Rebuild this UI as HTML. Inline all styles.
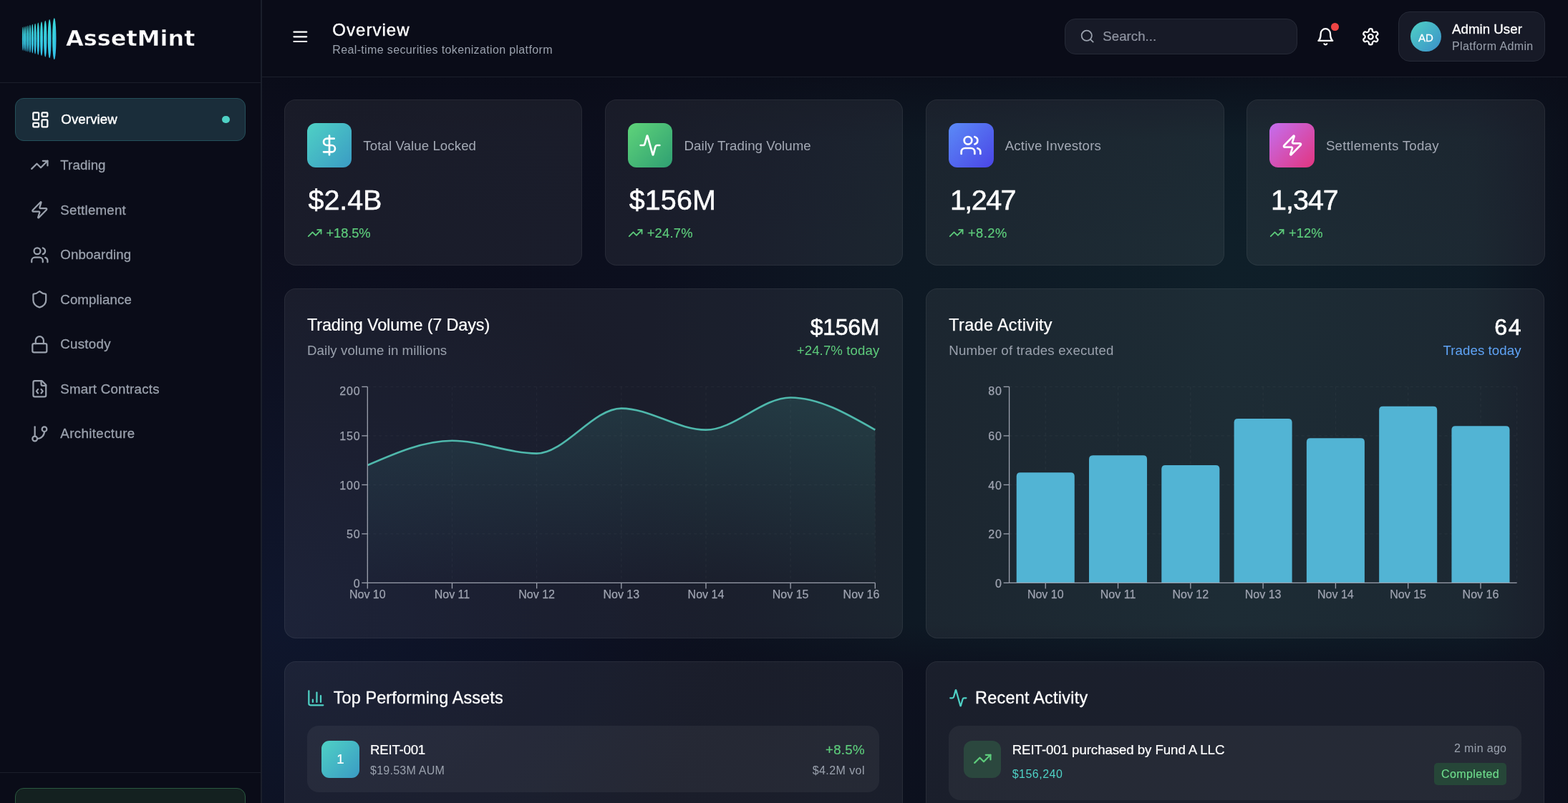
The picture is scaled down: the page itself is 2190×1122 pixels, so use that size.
<!DOCTYPE html>
<html lang="en"><head><meta charset="utf-8"><title>AssetMint – Overview</title><style>
*{margin:0;padding:0}
html,body{width:2190px;height:1122px;overflow:hidden;background:#0a0c18}
body{position:relative;font-family:"Liberation Sans",Arial,sans-serif;-webkit-font-smoothing:antialiased}
#app{position:absolute;left:0;top:0;width:2190px;height:1122px;overflow:hidden;will-change:transform}
.b{position:absolute}
.t{position:absolute;white-space:nowrap}
.ic{position:absolute;overflow:visible}
#mainbg{background:
 linear-gradient(180deg, rgba(10,12,24,0.75) 0px, rgba(10,12,24,0.5) 34px, rgba(10,12,24,0.12) 90px, rgba(10,12,24,0) 240px),
 radial-gradient(ellipse 620px 520px at 20px 760px, rgba(20,36,72,0.36), rgba(20,36,72,0) 100%),
 linear-gradient(0deg, rgba(12,15,29,0.85) 0px, rgba(12,15,29,0.8) 185px, rgba(12,15,29,0) 250px),
 linear-gradient(270deg, rgba(10,12,24,0.75) 0px, rgba(10,12,24,0.55) 30px, rgba(10,12,24,0) 130px),
 linear-gradient(90deg,#0c0e1d 0%,#0c0f1e 30%,#0e1924 50%,#0f1f29 74%,#0e1a25 100%);}
</style></head><body><div id="app">
<div class="b" style="left:0.00px;top:0.00px;width:2190.00px;height:1122.00px;background:#0a0c18;"></div>
<div class="b" id="mainbg" style="left:365px;top:107px;width:1824px;height:1015px;"></div>
<div class="b" style="left:365.00px;top:0.00px;width:1824.00px;height:107.00px;background:#0a0c18;"></div>
<div class="b" style="left:365.00px;top:106.70px;width:1824.00px;height:1.33px;background:#1c202c;"></div>
<div class="b" style="left:0.00px;top:0.00px;width:364.50px;height:1122.00px;background:#0a0c18;"></div>
<div class="b" style="left:364.20px;top:0.00px;width:1.33px;height:1122.00px;background:#1b1f2b;"></div>
<div class="b" style="left:0.00px;top:115.00px;width:364.50px;height:1.33px;background:#1b1f2b;"></div>
<div class="b" style="left:0.00px;top:1078.60px;width:364.50px;height:1.33px;background:#1b1f2b;"></div>
<div class="b" style="left:21.00px;top:1101.00px;width:321.50px;height:40.00px;background:#142120;border:1.33px solid #2a5a40;border-radius:12px;box-sizing:border-box;"></div>
<svg class="ic" style="left:0;top:0" width="120" height="110" viewBox="0 0 120 110"><defs><linearGradient id="lg" x1="0" y1="0" x2="1" y2="1"><stop offset="0" stop-color="#3fe3d3"/><stop offset="1" stop-color="#2fb4ee"/></linearGradient></defs><g fill="url(#lg)"><ellipse cx="31.80" cy="54.2" rx="0.90" ry="16.50"/><ellipse cx="33.93" cy="54.2" rx="0.98" ry="17.11"/><ellipse cx="36.32" cy="54.2" rx="1.08" ry="17.78"/><ellipse cx="38.99" cy="54.2" rx="1.19" ry="18.54"/><ellipse cx="41.98" cy="54.2" rx="1.30" ry="19.39"/><ellipse cx="45.33" cy="54.2" rx="1.44" ry="20.34"/><ellipse cx="49.09" cy="54.2" rx="1.59" ry="21.41"/><ellipse cx="53.29" cy="54.2" rx="1.75" ry="22.61"/><ellipse cx="58.00" cy="54.2" rx="1.94" ry="23.94"/><ellipse cx="63.28" cy="54.2" rx="2.15" ry="25.44"/><ellipse cx="69.18" cy="54.2" rx="2.39" ry="27.12"/><ellipse cx="75.80" cy="54.2" rx="2.65" ry="29.00"/></g></svg>
<div class="t" id="t1" style="top:38.75px;font-size:30.60px;line-height:30.60px;color:#ffffff;font-weight:700;font-family:'DejaVu Sans',sans-serif;left:91.80px;-webkit-text-stroke:0.5px #0a0c18;transform:scaleX(1.045);transform-origin:0 50%;">AssetMint</div>
<div class="b" style="left:21.00px;top:136.80px;width:321.50px;height:60.20px;background:#1a2d3a;border:1.33px solid #24505a;border-radius:12px;box-sizing:border-box;"></div>
<div class="b" style="left:310.20px;top:161.50px;width:10.67px;height:10.67px;background:#4fd1c5;border-radius:50%;"></div>
<svg class="ic" style="left:43.30px;top:153.70px" width="26.67" height="26.67" viewBox="0 0 24 24" fill="none" stroke="#ffffff" stroke-width="2" stroke-linecap="round" stroke-linejoin="round"><rect width="7" height="9" x="3" y="3" rx="1"/><rect width="7" height="5" x="14" y="3" rx="1"/><rect width="7" height="9" x="14" y="12" rx="1"/><rect width="7" height="5" x="3" y="16" rx="1"/></svg>
<div class="t" id="t2" style="top:158.28px;font-size:18.67px;line-height:18.67px;color:#ffffff;-webkit-text-stroke:0.4px #ffffff;letter-spacing:0.107px;left:85.30px;">Overview</div>
<svg class="ic" style="left:42.30px;top:217.40px" width="26.67" height="26.67" viewBox="0 0 24 24" fill="none" stroke="#9aa1ad" stroke-width="2" stroke-linecap="round" stroke-linejoin="round"><polyline points="22 7 13.5 15.5 8.5 10.5 2 17"/><polyline points="16 7 22 7 22 13"/></svg>
<div class="t" id="t3" style="top:221.98px;font-size:18.67px;line-height:18.67px;color:#9aa1ad;-webkit-text-stroke:0.3px #9aa1ad;letter-spacing:0.104px;left:84.30px;">Trading</div>
<svg class="ic" style="left:42.30px;top:280.10px" width="26.67" height="26.67" viewBox="0 0 24 24" fill="none" stroke="#9aa1ad" stroke-width="2" stroke-linecap="round" stroke-linejoin="round"><path d="M4 14a1 1 0 0 1-.78-1.63l9.9-10.2a.5.5 0 0 1 .86.46l-1.92 6.02A1 1 0 0 0 13 10h7a1 1 0 0 1 .78 1.63l-9.9 10.2a.5.5 0 0 1-.86-.46l1.92-6.02A1 1 0 0 0 11 14z"/></svg>
<div class="t" id="t4" style="top:284.68px;font-size:18.67px;line-height:18.67px;color:#9aa1ad;-webkit-text-stroke:0.3px #9aa1ad;letter-spacing:0.257px;left:84.30px;">Settlement</div>
<svg class="ic" style="left:42.30px;top:342.60px" width="26.67" height="26.67" viewBox="0 0 24 24" fill="none" stroke="#9aa1ad" stroke-width="2" stroke-linecap="round" stroke-linejoin="round"><path d="M16 21v-2a4 4 0 0 0-4-4H6a4 4 0 0 0-4 4v2"/><circle cx="9" cy="7" r="4"/><path d="M22 21v-2a4 4 0 0 0-3-3.87"/><path d="M16 3.13a4 4 0 0 1 0 7.75"/></svg>
<div class="t" id="t5" style="top:347.18px;font-size:18.67px;line-height:18.67px;color:#9aa1ad;-webkit-text-stroke:0.3px #9aa1ad;letter-spacing:0.156px;left:84.30px;">Onboarding</div>
<svg class="ic" style="left:42.30px;top:405.20px" width="26.67" height="26.67" viewBox="0 0 24 24" fill="none" stroke="#9aa1ad" stroke-width="2" stroke-linecap="round" stroke-linejoin="round"><path d="M20 13c0 5-3.5 7.5-7.66 8.95a1 1 0 0 1-.67-.01C7.5 20.5 4 18 4 13V6a1 1 0 0 1 1-1c2 0 4.5-1.2 6.24-2.72a1.17 1.17 0 0 1 1.52 0C14.51 3.81 17 5 19 5a1 1 0 0 1 1 1z"/></svg>
<div class="t" id="t6" style="top:409.78px;font-size:18.67px;line-height:18.67px;color:#9aa1ad;-webkit-text-stroke:0.3px #9aa1ad;letter-spacing:0.109px;left:84.30px;">Compliance</div>
<svg class="ic" style="left:42.30px;top:467.90px" width="26.67" height="26.67" viewBox="0 0 24 24" fill="none" stroke="#9aa1ad" stroke-width="2" stroke-linecap="round" stroke-linejoin="round"><rect width="18" height="11" x="3" y="11" rx="2" ry="2"/><path d="M7 11V7a5 5 0 0 1 10 0v4"/></svg>
<div class="t" id="t7" style="top:472.48px;font-size:18.67px;line-height:18.67px;color:#9aa1ad;-webkit-text-stroke:0.3px #9aa1ad;letter-spacing:0.291px;left:84.30px;">Custody</div>
<svg class="ic" style="left:42.30px;top:530.40px" width="26.67" height="26.67" viewBox="0 0 24 24" fill="none" stroke="#9aa1ad" stroke-width="2" stroke-linecap="round" stroke-linejoin="round"><path d="M10 12.5 8 15l2 2.5"/><path d="m14 12.5 2 2.5-2 2.5"/><path d="M14 2v4a2 2 0 0 0 2 2h4"/><path d="M15 2H6a2 2 0 0 0-2 2v16a2 2 0 0 0 2 2h12a2 2 0 0 0 2-2V7z"/></svg>
<div class="t" id="t8" style="top:534.98px;font-size:18.67px;line-height:18.67px;color:#9aa1ad;-webkit-text-stroke:0.3px #9aa1ad;letter-spacing:0.244px;left:84.30px;">Smart Contracts</div>
<svg class="ic" style="left:42.30px;top:592.90px" width="26.67" height="26.67" viewBox="0 0 24 24" fill="none" stroke="#9aa1ad" stroke-width="2" stroke-linecap="round" stroke-linejoin="round"><line x1="6" x2="6" y1="3" y2="15"/><circle cx="18" cy="6" r="3"/><circle cx="6" cy="18" r="3"/><path d="M18 9a9 9 0 0 1-9 9"/></svg>
<div class="t" id="t9" style="top:597.48px;font-size:18.67px;line-height:18.67px;color:#9aa1ad;-webkit-text-stroke:0.3px #9aa1ad;letter-spacing:0.396px;left:84.30px;">Architecture</div>
<svg class="ic" style="left:406.30px;top:37.50px" width="26.67" height="26.67" viewBox="0 0 24 24" fill="none" stroke="#ffffff" stroke-width="2" stroke-linecap="round" stroke-linejoin="round"><line x1="4" x2="20" y1="12" y2="12"/><line x1="4" x2="20" y1="6" y2="6"/><line x1="4" x2="20" y1="18" y2="18"/></svg>
<div class="t" id="t10" style="top:29.88px;font-size:24.00px;line-height:24.00px;color:#ffffff;-webkit-text-stroke:0.35px #ffffff;letter-spacing:1.024px;left:464.30px;">Overview</div>
<div class="t" id="t11" style="top:62.48px;font-size:16.00px;line-height:16.00px;color:#9aa1ad;letter-spacing:0.357px;left:464.30px;">Real-time securities tokenization platform</div>
<div class="b" style="left:1486.70px;top:26.00px;width:325.60px;height:50.00px;background:#171a27;border:1.33px solid #262a37;border-radius:15px;box-sizing:border-box;"></div>
<svg class="ic" style="left:1508.30px;top:40.20px" width="21.33" height="21.33" viewBox="0 0 24 24" fill="none" stroke="#9aa1ad" stroke-width="2" stroke-linecap="round" stroke-linejoin="round"><circle cx="11" cy="11" r="8"/><path d="m21 21-4.3-4.3"/></svg>
<div class="t" id="t12" style="top:42.18px;font-size:18.67px;line-height:18.67px;color:#8f94a1;-webkit-text-stroke:0.2px #8f94a1;letter-spacing:0.029px;left:1540.30px;">Search...</div>
<svg class="ic" style="left:1837.80px;top:37.50px" width="26.67" height="26.67" viewBox="0 0 24 24" fill="none" stroke="#ffffff" stroke-width="2" stroke-linecap="round" stroke-linejoin="round"><path d="M6 8a6 6 0 0 1 12 0c0 7 3 9 3 9H3s3-2 3-9"/><path d="M10.3 21a1.94 1.94 0 0 0 3.4 0"/></svg>
<div class="b" style="left:1859.00px;top:32.30px;width:10.67px;height:10.67px;background:#ee4444;border-radius:50%;"></div>
<svg class="ic" style="left:1900.50px;top:37.50px" width="26.67" height="26.67" viewBox="0 0 24 24" fill="none" stroke="#ffffff" stroke-width="2" stroke-linecap="round" stroke-linejoin="round"><path d="M12.22 2h-.44a2 2 0 0 0-2 2v.18a2 2 0 0 1-1 1.73l-.43.25a2 2 0 0 1-2 0l-.15-.08a2 2 0 0 0-2.73.73l-.22.38a2 2 0 0 0 .73 2.73l.15.1a2 2 0 0 1 1 1.72v.51a2 2 0 0 1-1 1.74l-.15.09a2 2 0 0 0-.73 2.73l.22.38a2 2 0 0 0 2.73.73l.15-.08a2 2 0 0 1 2 0l.43.25a2 2 0 0 1 1 1.73V20a2 2 0 0 0 2 2h.44a2 2 0 0 0 2-2v-.18a2 2 0 0 1 1-1.73l.43-.25a2 2 0 0 1 2 0l.15.08a2 2 0 0 0 2.73-.73l.22-.39a2 2 0 0 0-.73-2.73l-.15-.08a2 2 0 0 1-1-1.74v-.5a2 2 0 0 1 1-1.74l.15-.09a2 2 0 0 0 .73-2.73l-.22-.38a2 2 0 0 0-2.73-.73l-.15.08a2 2 0 0 1-2 0l-.43-.25a2 2 0 0 1-1-1.73V4a2 2 0 0 0-2-2z"/><circle cx="12" cy="12" r="3"/></svg>
<div class="b" style="left:1953.30px;top:15.70px;width:204.30px;height:70.20px;background:#171a27;border:1.33px solid #262a37;border-radius:16px;box-sizing:border-box;"></div>
<div class="b" style="left:1970.00px;top:29.70px;width:42.67px;height:42.67px;background:linear-gradient(135deg,#4fd1c5,#3b8fc9);border-radius:50%;"></div>
<div class="t" id="t13" style="top:44.87px;font-size:15.00px;line-height:15.00px;color:#ffffff;-webkit-text-stroke:0.3px #ffffff;left:1991.30px;transform:translateX(-50%);">AD</div>
<div class="t" id="t14" style="top:32.48px;font-size:18.67px;line-height:18.67px;color:#ffffff;-webkit-text-stroke:0.3px #ffffff;letter-spacing:0.048px;left:2028.00px;">Admin User</div>
<div class="t" id="t15" style="top:57.38px;font-size:16.00px;line-height:16.00px;color:#9aa1ad;letter-spacing:0.363px;left:2028.00px;">Platform Admin</div>
<div class="b" style="left:396.70px;top:139.30px;width:416.60px;height:231.40px;background:rgba(255,255,255,0.06);border:1.33px solid rgba(255,255,255,0.06);border-radius:16px;box-sizing:border-box;"></div>
<div class="b" style="left:428.80px;top:172.00px;width:62.40px;height:62.40px;background:linear-gradient(135deg,#4fd1c5,#3a9bc4);border-radius:12px;"></div>
<svg class="ic" style="left:444.00px;top:187.20px" width="32.00" height="32.00" viewBox="0 0 24 24" fill="none" stroke="#ffffff" stroke-width="2" stroke-linecap="round" stroke-linejoin="round"><line x1="12" x2="12" y1="2" y2="22"/><path d="M17 5H9.5a3.5 3.5 0 0 0 0 7h5a3.5 3.5 0 0 1 0 7H6"/></svg>
<div class="t" id="t16" style="top:195.38px;font-size:18.67px;line-height:18.67px;color:#a3a9b5;letter-spacing:0.084px;left:507.30px;">Total Value Locked</div>
<div class="t" id="t17" style="top:260.30px;font-size:39.50px;line-height:39.50px;color:#ffffff;-webkit-text-stroke:0.5px #ffffff;letter-spacing:-0.084px;left:430.50px;">$2.4B</div>
<svg class="ic" style="left:428.70px;top:315.30px" width="21.33" height="21.33" viewBox="0 0 24 24" fill="none" stroke="#5dcb7b" stroke-width="2" stroke-linecap="round" stroke-linejoin="round"><polyline points="22 7 13.5 15.5 8.5 10.5 2 17"/><polyline points="16 7 22 7 22 13"/></svg>
<div class="t" id="t18" style="top:317.26px;font-size:18.30px;line-height:18.30px;color:#5dcb7b;-webkit-text-stroke:0.2px #5dcb7b;letter-spacing:-0.083px;left:455.50px;">+18.5%</div>
<div class="b" style="left:844.90px;top:139.30px;width:416.60px;height:231.40px;background:rgba(255,255,255,0.06);border:1.33px solid rgba(255,255,255,0.06);border-radius:16px;box-sizing:border-box;"></div>
<div class="b" style="left:877.00px;top:172.00px;width:62.40px;height:62.40px;background:linear-gradient(135deg,#5fd47a,#2f9f72);border-radius:12px;"></div>
<svg class="ic" style="left:892.20px;top:187.20px" width="32.00" height="32.00" viewBox="0 0 24 24" fill="none" stroke="#ffffff" stroke-width="2" stroke-linecap="round" stroke-linejoin="round"><path d="M22 12h-2.48a2 2 0 0 0-1.93 1.46l-2.35 8.36a.25.25 0 0 1-.48 0L9.24 2.18a.25.25 0 0 0-.48 0l-2.35 8.36A2 2 0 0 1 4.49 12H2"/></svg>
<div class="t" id="t19" style="top:195.38px;font-size:18.67px;line-height:18.67px;color:#a3a9b5;letter-spacing:0.048px;left:955.50px;">Daily Trading Volume</div>
<div class="t" id="t20" style="top:260.30px;font-size:39.50px;line-height:39.50px;color:#ffffff;-webkit-text-stroke:0.5px #ffffff;letter-spacing:0.105px;left:878.70px;">$156M</div>
<svg class="ic" style="left:876.90px;top:315.30px" width="21.33" height="21.33" viewBox="0 0 24 24" fill="none" stroke="#5dcb7b" stroke-width="2" stroke-linecap="round" stroke-linejoin="round"><polyline points="22 7 13.5 15.5 8.5 10.5 2 17"/><polyline points="16 7 22 7 22 13"/></svg>
<div class="t" id="t21" style="top:317.26px;font-size:18.30px;line-height:18.30px;color:#5dcb7b;-webkit-text-stroke:0.2px #5dcb7b;letter-spacing:0.237px;left:903.70px;">+24.7%</div>
<div class="b" style="left:1293.10px;top:139.30px;width:416.60px;height:231.40px;background:rgba(255,255,255,0.06);border:1.33px solid rgba(255,255,255,0.06);border-radius:16px;box-sizing:border-box;"></div>
<div class="b" style="left:1325.20px;top:172.00px;width:62.40px;height:62.40px;background:linear-gradient(135deg,#5b8bf7,#4a45e6);border-radius:12px;"></div>
<svg class="ic" style="left:1340.40px;top:187.20px" width="32.00" height="32.00" viewBox="0 0 24 24" fill="none" stroke="#ffffff" stroke-width="2" stroke-linecap="round" stroke-linejoin="round"><path d="M16 21v-2a4 4 0 0 0-4-4H6a4 4 0 0 0-4 4v2"/><circle cx="9" cy="7" r="4"/><path d="M22 21v-2a4 4 0 0 0-3-3.87"/><path d="M16 3.13a4 4 0 0 1 0 7.75"/></svg>
<div class="t" id="t22" style="top:195.38px;font-size:18.67px;line-height:18.67px;color:#a3a9b5;letter-spacing:0.167px;left:1403.70px;">Active Investors</div>
<div class="t" id="t23" style="top:260.30px;font-size:39.50px;line-height:39.50px;color:#ffffff;-webkit-text-stroke:0.5px #ffffff;letter-spacing:-1.540px;left:1326.90px;">1,247</div>
<svg class="ic" style="left:1325.10px;top:315.30px" width="21.33" height="21.33" viewBox="0 0 24 24" fill="none" stroke="#5dcb7b" stroke-width="2" stroke-linecap="round" stroke-linejoin="round"><polyline points="22 7 13.5 15.5 8.5 10.5 2 17"/><polyline points="16 7 22 7 22 13"/></svg>
<div class="t" id="t24" style="top:317.26px;font-size:18.30px;line-height:18.30px;color:#5dcb7b;-webkit-text-stroke:0.2px #5dcb7b;letter-spacing:0.510px;left:1351.90px;">+8.2%</div>
<div class="b" style="left:1741.30px;top:139.30px;width:416.60px;height:231.40px;background:rgba(255,255,255,0.06);border:1.33px solid rgba(255,255,255,0.06);border-radius:16px;box-sizing:border-box;"></div>
<div class="b" style="left:1773.40px;top:172.00px;width:62.40px;height:62.40px;background:linear-gradient(135deg,#c46ff0,#e2357f);border-radius:12px;"></div>
<svg class="ic" style="left:1788.60px;top:187.20px" width="32.00" height="32.00" viewBox="0 0 24 24" fill="none" stroke="#ffffff" stroke-width="2" stroke-linecap="round" stroke-linejoin="round"><path d="M4 14a1 1 0 0 1-.78-1.63l9.9-10.2a.5.5 0 0 1 .86.46l-1.92 6.02A1 1 0 0 0 13 10h7a1 1 0 0 1 .78 1.63l-9.9 10.2a.5.5 0 0 1-.86-.46l1.92-6.02A1 1 0 0 0 11 14z"/></svg>
<div class="t" id="t25" style="top:195.38px;font-size:18.67px;line-height:18.67px;color:#a3a9b5;letter-spacing:0.285px;left:1851.90px;">Settlements Today</div>
<div class="t" id="t26" style="top:260.30px;font-size:39.50px;line-height:39.50px;color:#ffffff;-webkit-text-stroke:0.5px #ffffff;letter-spacing:-1.040px;left:1775.10px;">1,347</div>
<svg class="ic" style="left:1773.30px;top:315.30px" width="21.33" height="21.33" viewBox="0 0 24 24" fill="none" stroke="#5dcb7b" stroke-width="2" stroke-linecap="round" stroke-linejoin="round"><polyline points="22 7 13.5 15.5 8.5 10.5 2 17"/><polyline points="16 7 22 7 22 13"/></svg>
<div class="t" id="t27" style="top:317.26px;font-size:18.30px;line-height:18.30px;color:#5dcb7b;-webkit-text-stroke:0.2px #5dcb7b;letter-spacing:0.045px;left:1800.10px;">+12%</div>
<div class="b" style="left:396.70px;top:403.30px;width:864.30px;height:488.70px;background:rgba(255,255,255,0.06);border:1.33px solid rgba(255,255,255,0.06);border-radius:16px;box-sizing:border-box;"></div>
<div class="b" style="left:1292.70px;top:403.30px;width:864.60px;height:488.70px;background:rgba(255,255,255,0.06);border:1.33px solid rgba(255,255,255,0.06);border-radius:16px;box-sizing:border-box;"></div>
<div class="t" id="t28" style="top:442.87px;font-size:23.40px;line-height:23.40px;color:#ffffff;-webkit-text-stroke:0.2px #ffffff;letter-spacing:-0.120px;left:429.00px;">Trading Volume (7 Days)</div>
<div class="t" id="t29" style="top:481.48px;font-size:18.67px;line-height:18.67px;color:#9aa1ad;letter-spacing:0.057px;left:429.00px;">Daily volume in millions</div>
<div class="t" id="t30" style="top:441.27px;font-size:32.00px;line-height:32.00px;color:#ffffff;-webkit-text-stroke:0.6px #ffffff;letter-spacing:-0.311px;right:962.01px;">$156M</div>
<div class="t" id="t31" style="top:481.48px;font-size:18.67px;line-height:18.67px;color:#5dcb7b;letter-spacing:0.089px;right:961.61px;">+24.7% today</div>
<div class="t" id="t32" style="top:442.87px;font-size:23.40px;line-height:23.40px;color:#ffffff;-webkit-text-stroke:0.25px #ffffff;letter-spacing:0.359px;left:1325.30px;">Trade Activity</div>
<div class="t" id="t33" style="top:481.48px;font-size:18.67px;line-height:18.67px;color:#9aa1ad;letter-spacing:0.215px;left:1325.30px;">Number of trades executed</div>
<div class="t" id="t34" style="top:441.27px;font-size:32.00px;line-height:32.00px;color:#ffffff;-webkit-text-stroke:0.6px #ffffff;letter-spacing:1.806px;right:63.59px;">64</div>
<div class="t" id="t35" style="top:481.48px;font-size:18.67px;line-height:18.67px;color:#5fa3f5;letter-spacing:0.091px;right:65.31px;">Trades today</div>
<svg class="ic" style="left:0;top:0" width="2190" height="1122" viewBox="0 0 2190 1122" font-family="'Liberation Sans',Arial,sans-serif" font-size="16" stroke-width="0.25"><defs><linearGradient id="ag" x1="0" y1="0" x2="0" y2="1"><stop offset="0" stop-color="#4db6ac" stop-opacity="0.17"/><stop offset="1" stop-color="#4db6ac" stop-opacity="0.0"/></linearGradient></defs><line x1="513.3" x2="1222.3" y1="814.40" y2="814.40" stroke="#ffffff" stroke-opacity="0.038" stroke-width="1.33" stroke-dasharray="4 4"/><line x1="513.3" x2="1222.3" y1="745.90" y2="745.90" stroke="#ffffff" stroke-opacity="0.038" stroke-width="1.33" stroke-dasharray="4 4"/><line x1="513.3" x2="1222.3" y1="677.40" y2="677.40" stroke="#ffffff" stroke-opacity="0.038" stroke-width="1.33" stroke-dasharray="4 4"/><line x1="513.3" x2="1222.3" y1="608.90" y2="608.90" stroke="#ffffff" stroke-opacity="0.038" stroke-width="1.33" stroke-dasharray="4 4"/><line x1="513.3" x2="1222.3" y1="540.40" y2="540.40" stroke="#ffffff" stroke-opacity="0.038" stroke-width="1.33" stroke-dasharray="4 4"/><line x1="513.30" x2="513.30" y1="540.4" y2="814.4" stroke="#ffffff" stroke-opacity="0.038" stroke-width="1.33" stroke-dasharray="4 4"/><line x1="631.47" x2="631.47" y1="540.4" y2="814.4" stroke="#ffffff" stroke-opacity="0.038" stroke-width="1.33" stroke-dasharray="4 4"/><line x1="749.63" x2="749.63" y1="540.4" y2="814.4" stroke="#ffffff" stroke-opacity="0.038" stroke-width="1.33" stroke-dasharray="4 4"/><line x1="867.80" x2="867.80" y1="540.4" y2="814.4" stroke="#ffffff" stroke-opacity="0.038" stroke-width="1.33" stroke-dasharray="4 4"/><line x1="985.97" x2="985.97" y1="540.4" y2="814.4" stroke="#ffffff" stroke-opacity="0.038" stroke-width="1.33" stroke-dasharray="4 4"/><line x1="1104.13" x2="1104.13" y1="540.4" y2="814.4" stroke="#ffffff" stroke-opacity="0.038" stroke-width="1.33" stroke-dasharray="4 4"/><line x1="1222.30" x2="1222.30" y1="540.4" y2="814.4" stroke="#ffffff" stroke-opacity="0.038" stroke-width="1.33" stroke-dasharray="4 4"/><path d="M513.30,650.00C552.69,632.88,592.08,615.75,631.47,615.75C670.86,615.75,710.24,633.56,749.63,633.56C789.02,633.56,828.41,570.54,867.80,570.54C907.19,570.54,946.58,600.68,985.97,600.68C1025.36,600.68,1064.74,555.47,1104.13,555.47C1143.52,555.47,1182.91,578.08,1222.30,600.68L1222.3,814.4L513.3,814.4Z" fill="url(#ag)"/><path d="M513.30,650.00C552.69,632.88,592.08,615.75,631.47,615.75C670.86,615.75,710.24,633.56,749.63,633.56C789.02,633.56,828.41,570.54,867.80,570.54C907.19,570.54,946.58,600.68,985.97,600.68C1025.36,600.68,1064.74,555.47,1104.13,555.47C1143.52,555.47,1182.91,578.08,1222.30,600.68" fill="none" stroke="#4fb8ac" stroke-width="2.67"/><line x1="513.3" x2="513.3" y1="540.4" y2="814.4" stroke="#9a9fac" stroke-width="1.33"/><line x1="513.3" x2="1222.3" y1="814.4" y2="814.4" stroke="#9a9fac" stroke-width="1.33"/><line x1="505.29999999999995" x2="513.3" y1="814.40" y2="814.40" stroke="#9a9fac" stroke-width="1.33"/><text x="503.40" y="820.90" text-anchor="end" letter-spacing="0.8" fill="#9ea3b0" stroke="#9ea3b0">0</text><line x1="505.29999999999995" x2="513.3" y1="745.90" y2="745.90" stroke="#9a9fac" stroke-width="1.33"/><text x="503.40" y="752.40" text-anchor="end" letter-spacing="0.8" fill="#9ea3b0" stroke="#9ea3b0">50</text><line x1="505.29999999999995" x2="513.3" y1="677.40" y2="677.40" stroke="#9a9fac" stroke-width="1.33"/><text x="503.40" y="683.90" text-anchor="end" letter-spacing="0.8" fill="#9ea3b0" stroke="#9ea3b0">100</text><line x1="505.29999999999995" x2="513.3" y1="608.90" y2="608.90" stroke="#9a9fac" stroke-width="1.33"/><text x="503.40" y="615.40" text-anchor="end" letter-spacing="0.8" fill="#9ea3b0" stroke="#9ea3b0">150</text><line x1="505.29999999999995" x2="513.3" y1="540.40" y2="540.40" stroke="#9a9fac" stroke-width="1.33"/><text x="503.40" y="552.30" text-anchor="end" letter-spacing="0.8" fill="#9ea3b0" stroke="#9ea3b0">200</text><line x1="513.30" x2="513.30" y1="814.4" y2="822.4" stroke="#9a9fac" stroke-width="1.33"/><text x="513.30" y="836.1" text-anchor="middle" fill="#9ea3b0" stroke="#9ea3b0">Nov 10</text><line x1="631.47" x2="631.47" y1="814.4" y2="822.4" stroke="#9a9fac" stroke-width="1.33"/><text x="631.47" y="836.1" text-anchor="middle" fill="#9ea3b0" stroke="#9ea3b0">Nov 11</text><line x1="749.63" x2="749.63" y1="814.4" y2="822.4" stroke="#9a9fac" stroke-width="1.33"/><text x="749.63" y="836.1" text-anchor="middle" fill="#9ea3b0" stroke="#9ea3b0">Nov 12</text><line x1="867.80" x2="867.80" y1="814.4" y2="822.4" stroke="#9a9fac" stroke-width="1.33"/><text x="867.80" y="836.1" text-anchor="middle" fill="#9ea3b0" stroke="#9ea3b0">Nov 13</text><line x1="985.97" x2="985.97" y1="814.4" y2="822.4" stroke="#9a9fac" stroke-width="1.33"/><text x="985.97" y="836.1" text-anchor="middle" fill="#9ea3b0" stroke="#9ea3b0">Nov 14</text><line x1="1104.13" x2="1104.13" y1="814.4" y2="822.4" stroke="#9a9fac" stroke-width="1.33"/><text x="1104.13" y="836.1" text-anchor="middle" fill="#9ea3b0" stroke="#9ea3b0">Nov 15</text><line x1="1222.30" x2="1222.30" y1="814.4" y2="822.4" stroke="#9a9fac" stroke-width="1.33"/><text x="1228.3" y="836.1" text-anchor="end" fill="#9ea3b0" stroke="#9ea3b0">Nov 16</text><line x1="1409.6" x2="2118.6" y1="814.40" y2="814.40" stroke="#ffffff" stroke-opacity="0.038" stroke-width="1.33" stroke-dasharray="4 4"/><line x1="1409.6" x2="2118.6" y1="745.90" y2="745.90" stroke="#ffffff" stroke-opacity="0.038" stroke-width="1.33" stroke-dasharray="4 4"/><line x1="1409.6" x2="2118.6" y1="677.40" y2="677.40" stroke="#ffffff" stroke-opacity="0.038" stroke-width="1.33" stroke-dasharray="4 4"/><line x1="1409.6" x2="2118.6" y1="608.90" y2="608.90" stroke="#ffffff" stroke-opacity="0.038" stroke-width="1.33" stroke-dasharray="4 4"/><line x1="1409.6" x2="2118.6" y1="540.40" y2="540.40" stroke="#ffffff" stroke-opacity="0.038" stroke-width="1.33" stroke-dasharray="4 4"/><line x1="1460.24" x2="1460.24" y1="540.4" y2="814.4" stroke="#ffffff" stroke-opacity="0.038" stroke-width="1.33" stroke-dasharray="4 4"/><line x1="1561.53" x2="1561.53" y1="540.4" y2="814.4" stroke="#ffffff" stroke-opacity="0.038" stroke-width="1.33" stroke-dasharray="4 4"/><line x1="1662.81" x2="1662.81" y1="540.4" y2="814.4" stroke="#ffffff" stroke-opacity="0.038" stroke-width="1.33" stroke-dasharray="4 4"/><line x1="1764.10" x2="1764.10" y1="540.4" y2="814.4" stroke="#ffffff" stroke-opacity="0.038" stroke-width="1.33" stroke-dasharray="4 4"/><line x1="1865.39" x2="1865.39" y1="540.4" y2="814.4" stroke="#ffffff" stroke-opacity="0.038" stroke-width="1.33" stroke-dasharray="4 4"/><line x1="1966.67" x2="1966.67" y1="540.4" y2="814.4" stroke="#ffffff" stroke-opacity="0.038" stroke-width="1.33" stroke-dasharray="4 4"/><line x1="2067.96" x2="2067.96" y1="540.4" y2="814.4" stroke="#ffffff" stroke-opacity="0.038" stroke-width="1.33" stroke-dasharray="4 4"/><line x1="1409.6" x2="1409.6" y1="540.4" y2="814.4" stroke="#ffffff" stroke-opacity="0.038" stroke-width="1.33" stroke-dasharray="4 4"/><line x1="2118.6" x2="2118.6" y1="540.4" y2="814.4" stroke="#ffffff" stroke-opacity="0.038" stroke-width="1.33" stroke-dasharray="4 4"/><path d="M1419.73,814.4V665.61Q1419.73,660.27,1425.06,660.27H1495.43Q1500.76,660.27,1500.76,665.61V814.4Z" fill="#52b4d4"/><path d="M1521.01,814.4V641.63Q1521.01,636.30,1526.34,636.30H1596.71Q1602.04,636.30,1602.04,641.63V814.4Z" fill="#52b4d4"/><path d="M1622.30,814.4V655.33Q1622.30,650.00,1627.63,650.00H1698.00Q1703.33,650.00,1703.33,655.33V814.4Z" fill="#52b4d4"/><path d="M1723.59,814.4V590.25Q1723.59,584.92,1728.92,584.92H1799.28Q1804.61,584.92,1804.61,590.25V814.4Z" fill="#52b4d4"/><path d="M1824.87,814.4V617.66Q1824.87,612.33,1830.20,612.33H1900.57Q1905.90,612.33,1905.90,617.66V814.4Z" fill="#52b4d4"/><path d="M1926.16,814.4V573.13Q1926.16,567.80,1931.49,567.80H2001.86Q2007.19,567.80,2007.19,573.13V814.4Z" fill="#52b4d4"/><path d="M2027.44,814.4V600.53Q2027.44,595.20,2032.77,595.20H2103.14Q2108.47,595.20,2108.47,600.53V814.4Z" fill="#52b4d4"/><line x1="1409.6" x2="1409.6" y1="540.4" y2="814.4" stroke="#9a9fac" stroke-width="1.33"/><line x1="1409.6" x2="2118.6" y1="814.4" y2="814.4" stroke="#9a9fac" stroke-width="1.33"/><line x1="1401.6" x2="1409.6" y1="814.40" y2="814.40" stroke="#9a9fac" stroke-width="1.33"/><text x="1399.70" y="820.90" text-anchor="end" letter-spacing="0.8" fill="#9ea3b0" stroke="#9ea3b0">0</text><line x1="1401.6" x2="1409.6" y1="745.90" y2="745.90" stroke="#9a9fac" stroke-width="1.33"/><text x="1399.70" y="752.40" text-anchor="end" letter-spacing="0.8" fill="#9ea3b0" stroke="#9ea3b0">20</text><line x1="1401.6" x2="1409.6" y1="677.40" y2="677.40" stroke="#9a9fac" stroke-width="1.33"/><text x="1399.70" y="683.90" text-anchor="end" letter-spacing="0.8" fill="#9ea3b0" stroke="#9ea3b0">40</text><line x1="1401.6" x2="1409.6" y1="608.90" y2="608.90" stroke="#9a9fac" stroke-width="1.33"/><text x="1399.70" y="615.40" text-anchor="end" letter-spacing="0.8" fill="#9ea3b0" stroke="#9ea3b0">60</text><line x1="1401.6" x2="1409.6" y1="540.40" y2="540.40" stroke="#9a9fac" stroke-width="1.33"/><text x="1399.70" y="552.30" text-anchor="end" letter-spacing="0.8" fill="#9ea3b0" stroke="#9ea3b0">80</text><line x1="1460.24" x2="1460.24" y1="814.4" y2="822.4" stroke="#9a9fac" stroke-width="1.33"/><text x="1460.24" y="836.1" text-anchor="middle" fill="#9ea3b0" stroke="#9ea3b0">Nov 10</text><line x1="1561.53" x2="1561.53" y1="814.4" y2="822.4" stroke="#9a9fac" stroke-width="1.33"/><text x="1561.53" y="836.1" text-anchor="middle" fill="#9ea3b0" stroke="#9ea3b0">Nov 11</text><line x1="1662.81" x2="1662.81" y1="814.4" y2="822.4" stroke="#9a9fac" stroke-width="1.33"/><text x="1662.81" y="836.1" text-anchor="middle" fill="#9ea3b0" stroke="#9ea3b0">Nov 12</text><line x1="1764.10" x2="1764.10" y1="814.4" y2="822.4" stroke="#9a9fac" stroke-width="1.33"/><text x="1764.10" y="836.1" text-anchor="middle" fill="#9ea3b0" stroke="#9ea3b0">Nov 13</text><line x1="1865.39" x2="1865.39" y1="814.4" y2="822.4" stroke="#9a9fac" stroke-width="1.33"/><text x="1865.39" y="836.1" text-anchor="middle" fill="#9ea3b0" stroke="#9ea3b0">Nov 14</text><line x1="1966.67" x2="1966.67" y1="814.4" y2="822.4" stroke="#9a9fac" stroke-width="1.33"/><text x="1966.67" y="836.1" text-anchor="middle" fill="#9ea3b0" stroke="#9ea3b0">Nov 15</text><line x1="2067.96" x2="2067.96" y1="814.4" y2="822.4" stroke="#9a9fac" stroke-width="1.33"/><text x="2067.96" y="836.1" text-anchor="middle" fill="#9ea3b0" stroke="#9ea3b0">Nov 16</text></svg>
<div class="b" style="left:396.70px;top:924.00px;width:864.30px;height:260.00px;background:rgba(255,255,255,0.06);border:1.33px solid rgba(255,255,255,0.06);border-radius:16px;box-sizing:border-box;"></div>
<div class="b" style="left:1292.70px;top:924.00px;width:864.60px;height:260.00px;background:rgba(255,255,255,0.06);border:1.33px solid rgba(255,255,255,0.06);border-radius:16px;box-sizing:border-box;"></div>
<svg class="ic" style="left:428.00px;top:961.50px" width="26.67" height="26.67" viewBox="0 0 24 24" fill="none" stroke="#4fd1c5" stroke-width="2" stroke-linecap="round" stroke-linejoin="round"><path d="M3 3v16a2 2 0 0 0 2 2h16"/><path d="M18 17V9"/><path d="M13 17V5"/><path d="M8 17v-3"/></svg>
<div class="t" id="t36" style="top:963.87px;font-size:23.40px;line-height:23.40px;color:#ffffff;-webkit-text-stroke:0.3px #ffffff;letter-spacing:0.144px;left:465.70px;">Top Performing Assets</div>
<svg class="ic" style="left:1324.50px;top:961.50px" width="26.67" height="26.67" viewBox="0 0 24 24" fill="none" stroke="#4fd1c5" stroke-width="2" stroke-linecap="round" stroke-linejoin="round"><path d="M22 12h-2.48a2 2 0 0 0-1.93 1.46l-2.35 8.36a.25.25 0 0 1-.48 0L9.24 2.18a.25.25 0 0 0-.48 0l-2.35 8.36A2 2 0 0 1 4.49 12H2"/></svg>
<div class="t" id="t37" style="top:963.87px;font-size:23.40px;line-height:23.40px;color:#ffffff;-webkit-text-stroke:0.3px #ffffff;letter-spacing:0.271px;left:1362.00px;">Recent Activity</div>
<div class="b" style="left:429.00px;top:1013.70px;width:799.30px;height:93.60px;background:rgba(255,255,255,0.05);border-radius:16px;"></div>
<div class="b" style="left:1325.00px;top:1013.70px;width:800.00px;height:104.00px;background:rgba(255,255,255,0.05);border-radius:16px;"></div>
<div class="b" style="left:449.30px;top:1034.50px;width:52.30px;height:52.30px;background:linear-gradient(135deg,#4fd1c5,#3a9bc4);border-radius:11px;"></div>
<div class="t" id="t38" style="top:1051.68px;font-size:18.67px;line-height:18.67px;color:#ffffff;-webkit-text-stroke:0.2px #ffffff;left:475.50px;transform:translateX(-50%);">1</div>
<div class="t" id="t39" style="top:1038.68px;font-size:18.67px;line-height:18.67px;color:#ffffff;-webkit-text-stroke:0.2px #ffffff;letter-spacing:-0.230px;left:517.00px;">REIT-001</div>
<div class="t" id="t40" style="top:1068.98px;font-size:16.00px;line-height:16.00px;color:#9aa1ad;letter-spacing:0.251px;left:517.00px;">$19.53M AUM</div>
<div class="t" id="t41" style="top:1038.68px;font-size:18.67px;line-height:18.67px;color:#5dcb7b;-webkit-text-stroke:0.2px #5dcb7b;letter-spacing:0.270px;right:982.23px;">+8.5%</div>
<div class="t" id="t42" style="top:1068.98px;font-size:16.00px;line-height:16.00px;color:#9aa1ad;letter-spacing:0.428px;right:982.07px;">$4.2M vol</div>
<div class="b" style="left:1346.00px;top:1034.50px;width:52.30px;height:52.30px;background:#2b473e;border-radius:12px;"></div>
<svg class="ic" style="left:1358.80px;top:1047.30px" width="26.67" height="26.67" viewBox="0 0 24 24" fill="none" stroke="#5dcb7b" stroke-width="2" stroke-linecap="round" stroke-linejoin="round"><polyline points="22 7 13.5 15.5 8.5 10.5 2 17"/><polyline points="16 7 22 7 22 13"/></svg>
<div class="t" id="t43" style="top:1038.88px;font-size:18.67px;line-height:18.67px;color:#ffffff;-webkit-text-stroke:0.2px #ffffff;letter-spacing:-0.064px;left:1413.70px;">REIT-001 purchased by Fund A LLC</div>
<div class="t" id="t44" style="top:1073.88px;font-size:16.00px;line-height:16.00px;color:#4fd1c5;letter-spacing:0.495px;left:1413.70px;">$156,240</div>
<div class="t" id="t45" style="top:1037.98px;font-size:16.00px;line-height:16.00px;color:#9aa1ad;letter-spacing:0.329px;right:85.67px;">2 min ago</div>
<div class="b" style="left:2002.70px;top:1066.30px;width:101.30px;height:30.70px;background:#264638;border-radius:5px;"></div>
<div class="t" id="t46" style="top:1074.08px;font-size:16.00px;line-height:16.00px;color:#6edc8c;-webkit-text-stroke:0.15px #6edc8c;letter-spacing:0.416px;left:2013.00px;">Completed</div>
</div></body></html>
